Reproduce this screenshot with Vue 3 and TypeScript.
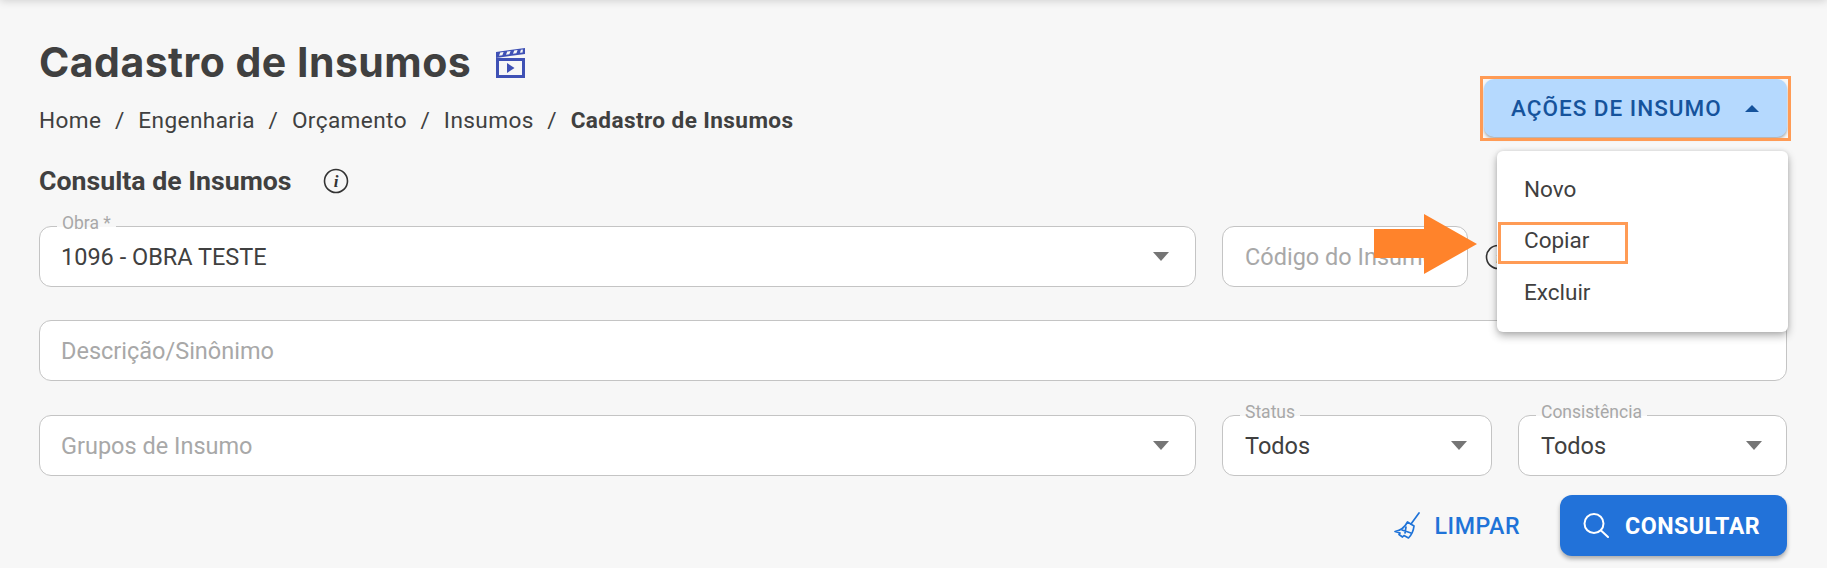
<script setup lang="ts">
const crumbs = ['Home', 'Engenharia', 'Orçamento', 'Insumos'];
const menuItems = ['Novo', 'Copiar', 'Excluir'];
</script>

<template>
  <div class="page">
    <div class="topbar"></div>

    <header class="head">
      <div>
        <h1 class="title">
          Cadastro de Insumos
          <svg class="clapper" viewBox="0 0 29 30" width="29" height="30">
            <path d="M0 10 L29 6 V0 L0 4 Z" fill="#3f51b5" />
            <path d="M3 7.8l3.4-.5 1.2-3.2-3.4.5zM10 6.8l3.4-.5 1.2-3.2-3.4.5zM17 5.8l3.4-.5 1.2-3.2-3.4.5zM24 4.8l2.6-.4.3-3-2 .3z" fill="#f7f7f7" />
            <rect x="1.5" y="11.5" width="26" height="17" fill="none" stroke="#3f51b5" stroke-width="3" />
            <path d="M11 15 L18.5 20 L11 25 Z" fill="#3f51b5" />
          </svg>
        </h1>
        <nav class="crumbs">
          <template v-for="c in crumbs" :key="c">
            <span>{{ c }}</span><span class="sep">/</span>
          </template>
          <b>Cadastro de Insumos</b>
        </nav>
      </div>
      <div class="actions">
        <button class="actions-btn">
          AÇÕES DE INSUMO
          <i class="caret-up"></i>
        </button>
      </div>
    </header>

    <div class="section">
      <span>Consulta de Insumos</span>
      <svg class="info" viewBox="0 0 26 26" width="26" height="26">
        <circle cx="13" cy="13" r="11.5" fill="none" stroke="#333" stroke-width="1.6" />
        <text x="13" y="18.5" text-anchor="middle" class="info-i">i</text>
      </svg>
    </div>

    <form class="form">
      <div class="row">
        <div class="field grow">
          <label>Obra *</label>
          <span class="value">1096 - OBRA TESTE</span>
          <i class="caret"></i>
        </div>
        <div class="field code">
          <span class="placeholder">Código do Insumo</span>
        </div>
        <div class="after-code">
          <svg class="info" viewBox="0 0 26 26" width="26" height="26">
            <circle cx="13" cy="13" r="11.5" fill="none" stroke="#333" stroke-width="1.6" />
            <text x="13" y="18.5" text-anchor="middle" class="info-i">i</text>
          </svg>
        </div>
      </div>

      <div class="row">
        <div class="field grow">
          <span class="placeholder">Descrição/Sinônimo</span>
        </div>
      </div>

      <div class="row third">
        <div class="field grow">
          <span class="placeholder">Grupos de Insumo</span>
          <i class="caret"></i>
        </div>
        <div class="field small">
          <label>Status</label>
          <span class="value">Todos</span>
          <i class="caret"></i>
        </div>
        <div class="field small last">
          <label>Consistência</label>
          <span class="value">Todos</span>
          <i class="caret"></i>
        </div>
      </div>

      <div class="buttons">
        <button type="button" class="clear">
          <svg viewBox="0 0 26 27" width="26" height="27" fill="none" stroke="#1f73d8" stroke-width="1.7" stroke-linejoin="round" stroke-linecap="round">
            <path d="M25 1 L17 12" />
            <path d="M13.5 10 L20 14 C19.5 18.5 17.5 23 14.5 26 L10 23.5 L8.5 25 L5 22.5 L6 21 L1 19.5 C6.5 18.5 11 15 13.5 10 Z" />
            <path d="M8 18 L17 21 M12 15 L11 21" />
          </svg>
          LIMPAR
        </button>
        <button type="button" class="search">
          <svg viewBox="0 0 26 25" width="26" height="25" fill="none" stroke="#fff" stroke-width="2" stroke-linecap="round">
            <circle cx="11" cy="10.5" r="9.5" />
            <path d="M18 17.5 L25 24" />
          </svg>
          CONSULTAR
        </button>
      </div>
    </form>

    <ul class="menu">
      <li v-for="m in menuItems" :key="m">{{ m }}</li>
    </ul>
    <div class="mark-btn"></div>
    <div class="mark-item"></div>
    <svg class="arrow" viewBox="0 0 103 60" width="103" height="60">
      <path d="M0 15 H50 V0 L103 30 L50 60 V44 H0 Z" fill="#ff832b" />
    </svg>
  </div>
</template>

<style>
html, body {
  margin: 0;
  background: #f7f7f7;
}
</style>

<style scoped>
* {
  box-sizing: border-box;
}

.page {
  position: relative;
  height: 568px;
  overflow: hidden;
  padding: 0 40px 0 39px;
  background: #f7f7f7;
  color: #404040;
  font-family: Roboto, sans-serif;
}

.topbar {
  position: absolute;
  left: 0;
  right: 0;
  top: -10px;
  height: 10px;
  box-shadow: 0 1px 8px rgba(0, 0, 0, 0.16);
}

.head {
  display: flex;
  justify-content: space-between;
  padding-top: 41px;
}

.title {
  display: flex;
  align-items: center;
  gap: 25px;
  margin: 0;
  height: 42px;
  font-family: Inter, sans-serif;
  font-size: 41px;
  font-weight: 700;
  letter-spacing: 0.47px;
  color: #404040;
}

.clapper {
  margin-top: 1px;
}

.crumbs {
  display: flex;
  align-items: center;
  height: 24px;
  margin-top: 25px;
  font-size: 22.6px;
  letter-spacing: 0.4px;
}

.crumbs b {
  font-weight: 700;
}

.sep {
  margin: 0 13.6px;
}

.actions {
  padding-top: 38px;
}

.actions-btn {
  display: flex;
  align-items: center;
  justify-content: space-between;
  width: 303px;
  height: 58px;
  padding: 0 28px 0 27px;
  border: 0;
  border-radius: 10px;
  background: #b5d9fe;
  color: #15539c;
  font-family: Roboto, sans-serif;
  font-size: 22.5px;
  font-weight: 500;
  letter-spacing: 1px;
  box-shadow: 0 2px 3px rgba(0, 0, 0, 0.3);
}

.caret-up {
  border-left: 7px solid transparent;
  border-right: 7px solid transparent;
  border-bottom: 7px solid #15539c;
}

.section {
  display: flex;
  align-items: center;
  gap: 31px;
  height: 30px;
  margin-top: 29px;
  font-size: 26.7px;
  font-weight: 700;
}

.info-i {
  font-family: "Liberation Serif", serif;
  font-style: italic;
  font-size: 17px;
  fill: #333;
}

.form {
  display: flex;
  flex-direction: column;
  gap: 33px;
  margin-top: 30px;
}

.row {
  display: flex;
  gap: 26px;
}

.row.third {
  margin-top: 1px;
}

.field {
  position: relative;
  display: flex;
  align-items: center;
  height: 61px;
  padding: 0 24px 0 22px;
  background: #fff;
  border: 1px solid #c4c4c4;
  border-radius: 12px;
  font-size: 23.5px;
}

.grow {
  flex: 1;
  padding-left: 21px;
}

.grow .caret {
  margin-right: 2px;
}

.code {
  width: 246px;
  overflow: hidden;
}

.after-code {
  display: flex;
  align-items: center;
  width: 302px;
  margin-left: -9px;
}

.small {
  width: 270px;
}

.small.last {
  width: 269px;
}

.field label {
  position: absolute;
  left: 17px;
  top: -13px;
  padding: 0 5px;
  height: 18px;
  line-height: 18px;
  font-size: 17.5px;
  color: #a8a8a8;
  background: linear-gradient(transparent 12px, #f7f7f7 12px, #f7f7f7 13px, transparent 13px);
}

.value {
  color: #404040;
}

.placeholder {
  color: #a8a8a8;
  white-space: nowrap;
}

.caret {
  margin-left: auto;
  border-left: 8px solid transparent;
  border-right: 8px solid transparent;
  border-top: 9px solid #757575;
}

.buttons {
  display: flex;
  justify-content: flex-end;
  align-items: center;
  gap: 40px;
  margin-top: -14px;
}

.buttons button {
  display: flex;
  align-items: center;
  border: 0;
  font-family: Roboto, sans-serif;
  font-size: 23.2px;
  font-weight: 500;
  letter-spacing: 0.5px;
}

.clear {
  gap: 15px;
  padding: 0;
  background: none;
  color: #1f73d8;
}

.search {
  gap: 16px;
  width: 227px;
  height: 61px;
  padding: 0 0 0 23px;
  border-radius: 12px;
  background: #2272d9;
  color: #fff;
  font-weight: 700 !important;
  box-shadow: 0 3px 4px rgba(0, 0, 0, 0.3);
}

.menu {
  position: absolute;
  left: 1497px;
  top: 151px;
  width: 291px;
  height: 181px;
  margin: 0;
  padding: 12px 0;
  list-style: none;
  background: #fff;
  border-radius: 6px;
  box-shadow: 0 4px 8px rgba(0, 0, 0, 0.3), 0 0 4px rgba(0, 0, 0, 0.1);
  font-size: 22.5px;
}

.menu li {
  display: flex;
  align-items: center;
  height: 51.5px;
  padding-left: 27px;
}

.mark-btn,
.mark-item {
  position: absolute;
  border: 3px solid #ff9b55;
}

.mark-btn {
  left: 1480px;
  top: 76px;
  width: 311px;
  height: 65px;
}

.mark-item {
  left: 1498px;
  top: 222px;
  width: 130px;
  height: 42px;
}

.arrow {
  position: absolute;
  left: 1374px;
  top: 214px;
}
</style>
